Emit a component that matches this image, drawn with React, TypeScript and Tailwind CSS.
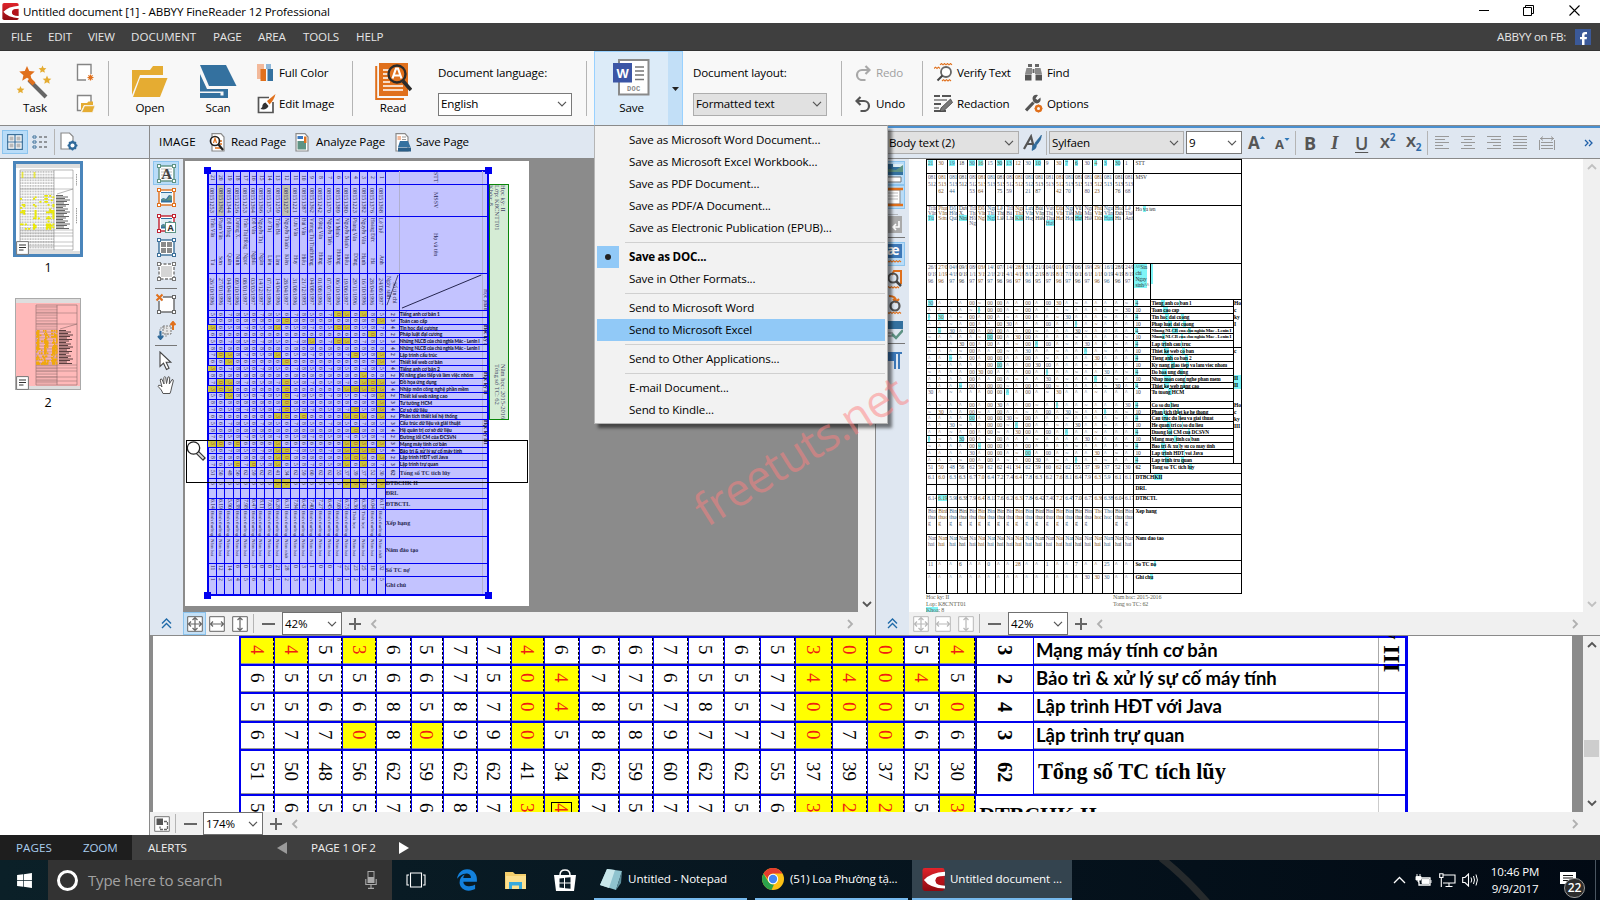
import React from "react";
import { FaWindows, FaEdgeLegacy } from "react-icons/fa";

type Kids = { children?: React.ReactNode };

/* ---------- shared bits ---------- */

const Down = ({ c = "#555" }: { c?: string }) => (
  <svg width="10" height="6" viewBox="0 0 10 6" className="shrink-0">
    <path d="M1 .8 5 4.8 9 .8" fill="none" stroke={c} strokeWidth="1.2" />
  </svg>
);

const Chev = ({ d, c = "#b0b0b0", w = 1.8 }: { d: "l" | "r" | "u" | "d"; c?: string; w?: number }) => {
  const p = { l: "M7 1 3 5 7 9", r: "M3 1 7 5 3 9", u: "M1 7 5 3 9 7", d: "M1 3 5 7 9 3" }[d];
  return (
    <svg width="10" height="10" viewBox="0 0 10 10" className="shrink-0">
      <path d={p} fill="none" stroke={c} strokeWidth={w} />
    </svg>
  );
};

const Sel = ({ cls, children }: Kids & { cls: string }) => (
  <div className={"flex shrink-0 items-center justify-between border pl-[2px] pr-[4px] " + cls}>
    <span>{children}</span>
    <Down />
  </div>
);

const Sep = ({ cls }: { cls: string }) => <div className={"w-px shrink-0 bg-[#b4b4b4] " + cls} />;

/* ---------- icons ---------- */

const Abbyy = ({ s }: { s: number }) => (
  <svg width={s} height={s} viewBox="0 0 24 24" className="shrink-0">
    <defs>
      <linearGradient id="ab" x1="0" y1="0" x2="0" y2="1">
        <stop offset="0" stopColor="#e0242b" />
        <stop offset="1" stopColor="#8e0a10" />
      </linearGradient>
    </defs>
    <rect x=".5" width="23" height="24" rx="2.5" fill="url(#ab)" />
    <path d="M2 12.500Q9 5 24 4V8Q14 8.500 14 13 14 18 24 18.500V21.500Q8 21 2 12.500Z" fill="#fff" />
    <circle cx="18.500" cy="13" r="4.200" fill="#b3121a" />
  </svg>
);

const Star = ({ x, y, r, c }: { x: number; y: number; r: number; c: string }) => (
  <path
    transform={`translate(${x} ${y}) scale(${r})`}
    d="M0-1 .28-.36 .97-.3 .45.16 .6.84 0 .48-.6.84-.45.16-.97-.3-.28-.36Z"
    fill={c}
  />
);

const TaskIcon = () => (
  <svg width="38" height="36" viewBox="0 0 38 36">
    <path d="M13 15 30 32" stroke="#666" strokeWidth="4" />
    <path d="M13 14 18 19" stroke="#e0701c" strokeWidth="4" />
    <Star x={11} y={9} r={8} c="#e0701c" />
    <Star x={26.500} y={4.500} r={4} c="#e5ac32" />
    <Star x={31} y={15} r={4.500} c="#e5ac32" />
    <Star x={4.500} y={25} r={4} c="#e5ac32" />
  </svg>
);

const NewPage = () => (
  <svg width="20" height="20" viewBox="0 0 20 20">
    <path d="M10 17H1.500V1.500H15V11" fill="#fff" stroke="#858585" strokeWidth="1.400" />
    <path d="M14.500 11.500v6M11.500 14.500h6M12.400 12.400l4.200 4.200M16.600 12.400l-4.200 4.200" stroke="#e0701c" strokeWidth="1.200" />
  </svg>
);
const OpenPage = () => (
  <svg width="20" height="20" viewBox="0 0 20 20">
    <path d="M5 16.500H1.500V1.500H15V8" fill="#fff" stroke="#858585" strokeWidth="1.400" />
    <path d="M5 9h6l1.500-1.500H17V11H8l-3 6Z" fill="#e5ac32" />
    <path d="M8.500 11.800H19l-2.500 6.700H5.500Z" fill="#e5ac32" stroke="#f8f8f8" strokeWidth=".7" />
  </svg>
);
const OpenIcon = () => (
  <svg width="36" height="32" viewBox="0 0 36 32">
    <path d="M0 4H18L21 0H31V9H8L0 29Z" fill="#e5ac32" />
    <path d="M8 12H35.500L28 31H1Z" fill="#e5ac32" />
  </svg>
);
const ScanIcon = () => (
  <svg width="37" height="34" viewBox="0 0 37 34">
    <path d="M0 0H26L36.500 21H9Z" fill="#34719f" />
    <path d="M0 9 7 24H28V33H0V28H20.500V30.500H23.500V26.500H0Z" fill="#34719f" fillRule="evenodd" />
  </svg>
);
const ColorIcon = () => (
  <svg width="17" height="18" viewBox="0 0 17 18">
    <path d="M0 0H7V15H0Z" fill="#f3b99a" />
    <path d="M9 0H14V5H9Z" fill="#8fb7d8" />
    <path d="M3.500 5H9V17H3.500Z" fill="#e0701c" />
    <path d="M10.500 5H16V17H10.500Z" fill="#34719f" />
  </svg>
);
const EditIcon = () => (
  <svg width="19" height="20" viewBox="0 0 19 20">
    <path d="M12 3.500H1.500V18.500H16V8" fill="#fff" stroke="#555" strokeWidth="1.700" />
    <path d="M18.500 0 10 7l2.500 3.500Q17 6 18.500 0Z" fill="#e0701c" />
    <path d="M8.500 8.500 11.500 12Q9.500 16.500 3.500 15 6 13 5.500 11 6.500 8.500 8.500 8.500Z" fill="#333" />
  </svg>
);
const ReadIcon = () => (
  <svg width="37" height="38" viewBox="0 0 37 38">
    <path d="M1.200 3V36H29" fill="none" stroke="#e0701c" strokeWidth="2" />
    <path d="M4 0H33V33H4Z" fill="#e0701c" />
    <path d="M8 7h6M8 11h5M8 15h5M8 19h7M8 23h20M8 27h20" stroke="#fff" strokeWidth="1.700" />
    <circle cx="22" cy="11" r="8.500" fill="#e0701c" stroke="#2b2b2b" strokeWidth="2.400" />
    <path d="M17.500 15.500 21 5.500h2l3.500 10M19 12.500h6" fill="none" stroke="#fff" strokeWidth="2.200" />
    <path d="M28 18 36 27" stroke="#2b2b2b" strokeWidth="3.600" />
  </svg>
);
const DocIcon = () => (
  <svg width="38" height="38" viewBox="0 0 38 38" className="font-['Liberation_Sans',sans-serif]">
    <path d="M6 1H35.500V35.500H6Z" fill="#fff" stroke="#8a8a8a" strokeWidth="2" />
    <path d="M22 8h9M22 12h9M22 16h9M22 20.500h9" stroke="#777" strokeWidth="1.500" />
    <path d="M0 4H19V23.500H0Z" fill="#3b55a5" />
    <text x="9.500" y="18.500" textAnchor="middle" fontSize="13" fontWeight="700" fill="#fff">W</text>
    <text x="20.800" y="31.800" textAnchor="middle" fontSize="7" fontWeight="700" fill="#888" letterSpacing=".3" className="font-['Liberation_Mono',monospace]">DOC</text>
  </svg>
);
const UndoIcon = ({ c, flip }: { c: string; flip?: boolean }) => (
  <svg width="16" height="16" viewBox="0 0 16 16" className={flip ? "-scale-x-100" : ""}>
    <path d="M1.500 5H9a5 5 0 0 1 0 10H5.500" fill="none" stroke={c} strokeWidth="2.200" />
    <path d="M5.500 1 1.500 5l4 4" fill="none" stroke={c} strokeWidth="2.200" />
  </svg>
);
const Wave = ({ x, y, n, c = "#e0701c" }: { x: number; y: number; n: number; c?: string }) => (
  <path d={`M${x} ${y}` + "l1.500 -1.300l1.500 1.300".repeat(n)} fill="none" stroke={c} strokeWidth="1.100" />
);
const VerifyIcon = () => (
  <svg width="19" height="19" viewBox="0 0 19 19">
    <Wave x={6} y={1.800} n={4} />
    <Wave x={0} y={5.500} n={2} />
    <Wave x={8} y={18} n={3} />
    <circle cx="12" cy="9" r="5" fill="#fff" stroke="#666" strokeWidth="1.800" />
    <path d="M8.500 12.500 3.500 17.500" stroke="#444" strokeWidth="2" />
  </svg>
);
const RedactIcon = () => (
  <svg width="19" height="19" viewBox="0 0 19 19">
    <path d="M0 2h6M8 2h9M0 10h7M0 17h12" stroke="#555" strokeWidth="1.800" />
    <path d="M0 6h13M0 14h5" stroke="#999" strokeWidth="1.800" />
    <path d="M16.500 5 18.500 8.500 9.500 17 6 17.500 7 14Z" fill="#777" stroke="#444" strokeWidth=".8" />
  </svg>
);
const FindIcon = () => (
  <svg width="17" height="18" viewBox="0 0 17 18">
    <path d="M3 0H7V3H3ZM10 0h4v3h-4ZM7.500 5h2v4h-2Z" fill="#666" />
    <path d="M1.500 4H7V10H0ZM10 4h5.500L17 10H10Z" fill="#8a8a8a" />
    <path d="M0 10.500H6.500V16.500H0ZM10.500 10.500H17V16.500H10.500Z" fill="#555" />
  </svg>
);
const OptIcon = () => (
  <svg width="19" height="19" viewBox="0 0 19 19">
    <path d="M1 16.500 8.500 8.500" stroke="#555" strokeWidth="3.200" />
    <path d="M15.500 3.500 12.500 6 10.500 4.500 13 1Q8.500 0 7.500 4 7.500 9 12 9.500 16.500 8.500 15.500 3.500Z" fill="#555" />
    <circle cx="13.500" cy="14.500" r="2.600" fill="none" stroke="#e0701c" strokeWidth="2.200" />
    <path d="M13.500 10.500v8M9.500 14.500h8M10.700 11.700l5.600 5.600M16.300 11.700l-5.600 5.600" stroke="#e0701c" strokeWidth="1.300" />
    <circle cx="13.500" cy="14.500" r="1.500" fill="#f8f8f8" />
  </svg>
);

const PageGlyph = ({ children }: Kids) => (
  <svg width="18" height="19" viewBox="0 0 18 19" className="shrink-0">
    <path d="M3 .7H12L15 4V18H3Z" fill="#fff" stroke="#8a8a8a" strokeWidth="1.200" />
    {children}
  </svg>
);

const Nodes = ({ c }: { c: string }) => (
  <>
    {[1.500, 16.500].map((x) => [1.500, 16.500].map((y) => (
      <rect key={x + "-" + y} x={x - 1.500} y={y - 1.500} width="3" height="3" fill="#fff" stroke={c} strokeWidth="1" transform="translate(.5 .5)" />
    )))}
  </>
);
const AreaIcon = ({ c, dash, children }: Kids & { c: string; dash?: boolean }) => (
  <svg width="19" height="19" viewBox="0 0 19 19" className="overflow-visible">
    <rect x="2" y="2" width="15" height="15" fill="#fff" stroke={c} strokeWidth="1.400" strokeDasharray={dash ? "3 1.500" : undefined} />
    <Nodes c={c} />
    {children}
  </svg>
);
const Pic = () => (
  <>
    <path d="M4 4H15V14.500H4Z" fill="#34719f" />
    <path d="M4 5h11v3l-3-1-3 4-3-1-2 1.500Z" fill="#dfeef5" />
    <path d="M4 12 7 10.500 9.500 12 13 7.500 15 8V12.500H4Z" fill="#5e9384" />
  </>
);

const Fit = ({ k, c = "#666" }: { k: 0 | 1 | 2; c?: string }) => (
  <svg width="16" height="16" viewBox="0 0 16 16">
    <path d="M.7.7H15.300V15.300H.7Z" fill="#fff" stroke={c} strokeWidth="1" />
    {k !== 1 && <path d="M8 1.500V14.500M5.500 4 8 1.500 10.500 4M5.500 12 8 14.500 10.500 12" fill="none" stroke={c} strokeWidth="1.200" />}
    {k !== 2 && <path d="M1.500 8H14.500M4 5.500 1.500 8 4 10.500M12 5.500 14.500 8 12 10.500" fill="none" stroke={c} strokeWidth="1.200" />}
  </svg>
);
const Minus = () => <div className="h-[2px] w-[13px] shrink-0 bg-[#666]" />;
const Plus = () => (
  <svg width="12" height="12" viewBox="0 0 12 12" className="shrink-0">
    <path d="M6 0V12M0 6H12" stroke="#666" strokeWidth="2" />
  </svg>
);
const DoubleUp = () => (
  <svg width="11" height="11" viewBox="0 0 11 11">
    <path d="M1 5.500 5.500 1 10 5.500M1 10 5.500 5.500 10 10" fill="none" stroke="#1f6aa8" strokeWidth="1.400" />
  </svg>
);

/* ---------- data ---------- */

const subjects = [
  "Tiếng anh cơ bản 1", "Toán cao cấp", "Tin học đại cương", "Pháp luật đại cương",
  "Những NLCB của chủ nghĩa Mác - Lenin I", "Những NLCB của chủ nghĩa Mác - Lenin I", "Lập trình cấu trúc",
  "Thiết kế web cơ bản", "Tiếng anh cơ bản 2", "Kĩ năng giao tiếp và làm việc nhóm", "Đồ họa ứng dụng",
  "Nhập môn công nghệ phần mềm", "Thiết kế web nâng cao", "Tư tưởng HCM", "Cơ sở dữ liệu",
  "Phân tích thiết kế hệ thống", "Cấu trúc dữ liệu và giải thuật", "Hệ quản trị cơ sở dữ liệu",
  "Đường lối CM của ĐCSVN", "Mạng máy tính cơ bản", "Bảo trì & xử lý sự cố máy tính",
  "Lập trình HĐT với Java", "Lập trình trự quan",
];
const failed: number[][] = [
  [15, 16, 18], [9, 20], [0, 8, 15, 16], [19], [12, 15, 16], [], [1, 2, 8, 17, 20], [2, 9, 20], [0], [18],
  [1, 2, 9, 18, 19, 20], [0, 1, 2, 9, 16, 17, 18, 19, 20], [2, 9, 20], [9, 20], [9, 17, 20],
  [8, 9, 11, 16, 17, 18, 20], [], [17], [], [0, 1, 3, 8, 16, 17, 18, 20], [8, 9, 16, 17, 18, 19],
  [8, 9, 16, 17, 18, 20], [3, 5, 8, 16, 18],
];
const ids = "1253 1362 1344 1256 1253 1364 1366 1375 1259 1257 1221 1387 1362 1242 1370 1389 1380 1223 1382 1376 1368".split(" ");
const first = ["Trần Văn", "Phạm Văn", "Đỗ Hồng", "Dương X.", "Trần Thị Hồng", "Đỗ Văn", "Nguyễn Thị", "Lê Thị", "Trần Bá", "Nguyễn Thành", "Lưu Văn", "Bùi Văn", "Vương Thị Thu", "Đặng Văn", "Nguyễn Tiến", "Vũ Minh", "Nguyễn Mạnh", "Phùng Văn", "Nguyễn Văn", "Hoàng Đức", "Lê Thế"];
const last = ["Tú", "Sơn", "Quân", "Ninh", "Ngọc", "Nghĩa", "Ngân", "Liên", "Lâm", "Kiên", "Huy", "Hiếu", "Hường", "Hưng", "Hợp", "Hương", "Hiếu", "Dũng", "Hạnh", "Hà", "Anh"];
const dates = "26/10/1996 27/01/1996 04/04/1997 09/10/1996 08/01/1997 03/03/1997 14/12/1997 07/12/1996 14/04/1996 28/04/1997 31/08/1996 21/12/1995 04/08/1997 01/08/1996 07/07/1997 06/10/1996 19/06/1997 29/11/1996 16/10/1996 28/04/1996 24/08/1997".split(" ");
const totals = "51 50 48 56 62 59 62 62 41 34 62 59 60 62 62 55 37 39 37 52 30".split(" ");
const averages = "6.14 6.19 5.90 6.38 7.98 6.47 8.11 7.63 6.28 6.31 7.84 6.42 7.40 7.27 6.45 7.08 6.73 6.36 6.38 6.04 6.17".split(" ");
const debts = "11 12 14 6 0 3 0 0 21 28 0 3 1 0 0 7 25 23 25 10 32".split(" ");
const cols = Array.from({ length: 21 }, (_, i) => i);
const grade = (r: number, c: number) => String(5 + ((r * 7 + c * 5 + r * c) % 4));

/* ---------- scanned page ---------- */

const scanGrid = "grid w-[177.7px] shrink-0 grid-cols-[27fr_24fr_26fr_23fr_25fr_23fr_24fr_25fr_26fr_26fr_27fr_24fr_25fr_27fr_26fr_26fr_25fr_26fr_26fr_26fr_26fr]";

const ScanRow = ({ h, cell, hot = [], hotCls = "bg-[#c9c43c] text-[#b04a20]", children, mid = "justify-center" }:
  Kids & { h: string; cell: (i: number) => React.ReactNode; hot?: number[]; hotCls?: string; mid?: string }) => (
  <div className={"flex border-b border-[#0000f0] " + h}>
    <div className={scanGrid}>
      {cols.map((i) => (
        <div key={i} className={"flex min-w-0 items-center overflow-hidden border-r border-[#0000f0] leading-none [writing-mode:vertical-rl] " + mid + " " + (hot.includes(i) ? hotCls : "")}>
          {cell(i)}
        </div>
      ))}
    </div>
    {children}
  </div>
);

const HeadCell = ({ children }: Kids) => (
  <>
    <div className="w-[14px] shrink-0 border-r border-[#b0b0d0]" />
    <div className="flex w-[83.3px] shrink-0 items-center justify-center border-r border-[#b0b0d0] pr-[10px] text-[6px] [writing-mode:vertical-rl]">
      {children}
    </div>
  </>
);
const FootCell = ({ children }: Kids) => (
  <div className="flex w-[97.3px] shrink-0 items-center border-r border-[#b0b0d0] text-[6px] font-bold">{children}</div>
);

const ScanTable = () => (
  <div className="relative h-[426px] w-[282px] shrink-0 border-2 border-[#0000f0] bg-[#c3c3ff] font-['Liberation_Serif',serif] text-[5.600px] leading-none tracking-normal text-[#2a2a55]">
    <div className="-ml-px -mt-px">
      <ScanRow h="h-[14px]" cell={(i) => 21 - i}><HeadCell>STT</HeadCell></ScanRow>
      <ScanRow h="h-[32px]" cell={(i) => <span className="text-[6.200px]">{"0815" + ids[i]}</span>} hot={[1, 9]} hotCls="bg-[#c0c0b4]"><HeadCell>MSSV</HeadCell></ScanRow>
      <ScanRow h="h-[57px]" mid="justify-between pb-[8px] pt-[1px]" cell={(i) => (<><span className="whitespace-nowrap text-[5.200px]">{first[i]}</span><span>{last[i]}</span></>)}>
        <HeadCell>Họ và tên</HeadCell>
      </ScanRow>
      <ScanRow h="h-[37px]" cell={(i) => <span className="text-[6px]">{dates[i]}</span>}>
        <div className="relative w-[14px] shrink-0 border-r border-[#0000f0]">
          <svg className="absolute inset-0 h-full w-full" viewBox="0 0 14 37" preserveAspectRatio="none"><path d="M13 1 1 32" stroke="#22224a" strokeWidth=".8" /></svg>
          <div className="flex flex-col pt-[2px] [writing-mode:vertical-rl]"><span className="pt-[6px]">Số tín chỉ</span><span>Ngày sinh</span></div>
        </div>
        <div className="w-[83.3px] shrink-0 border-r border-[#b0b0d0]">
          <svg className="h-full w-full" viewBox="0 0 83 37" preserveAspectRatio="none"><path d="M82 1 2 35" stroke="#22224a" strokeWidth="1" /></svg>
        </div>
        <div className="flex items-center justify-end text-[5.500px] [writing-mode:vertical-rl]">Học phần</div>
      </ScanRow>
      {subjects.map((s, r) => (
        <ScanRow key={r} h="h-[6.840px]" hot={failed[r]} cell={(i) => (failed[r].includes(i) ? (i % 2 ? "0" : "3") : grade(r, i))}>
          <div className="flex w-[14px] shrink-0 items-center justify-center border-r border-[#0000f0] font-bold [writing-mode:vertical-rl]">{2 + (r % 3)}</div>
          <div className={"w-[83.300px] shrink-0 whitespace-nowrap border-r border-[#b0b0d0] font-['Lato','Noto_Sans',sans-serif] font-black leading-[6px] text-[#14143c] " + (r === 4 || r === 5 ? "text-[4.700px] tracking-[-0.150px]" : "text-[4.900px] tracking-[-0.05px]")}>{s}</div>
          {(r === 2 || r === 9 || r === 16) && (
            <div className="w-[6px] overflow-visible whitespace-nowrap text-[5.500px] font-bold text-[#14143c] [writing-mode:vertical-rl]">{"Học kỳ " + (r === 2 ? "I" : r === 9 ? "II" : "III")}</div>
          )}
        </ScanRow>
      ))}
      <ScanRow h="h-[10.600px]" cell={(i) => totals[i]}>
        <div className="flex w-[14px] shrink-0 items-center justify-center border-r border-[#0000f0] font-bold [writing-mode:vertical-rl]">62</div>
        <div className="flex w-[83.300px] items-center text-[6px] font-bold">Tổng số TC tích lũy</div>
      </ScanRow>
      <ScanRow h="h-[10px]" hot={[8, 9, 16, 17, 18, 20]} cell={(i) => grade(3, i)}><FootCell>ĐTBCHK II</FootCell></ScanRow>
      <ScanRow h="h-[10px]" cell={() => ""}><FootCell>ĐRL</FootCell></ScanRow>
      <ScanRow h="h-[11px]" cell={(i) => averages[i]}><FootCell>ĐTBCTL</FootCell></ScanRow>
      <ScanRow h="h-[27px]" mid="justify-start pt-[1px]" cell={(i) => <span className="whitespace-nowrap text-[5px]">{i === 17 || i === 18 ? "Thôi học" : "Bình thường"}</span>}><FootCell>Xếp hạng</FootCell></ScanRow>
      <ScanRow h="h-[27px]" mid="justify-start pt-[2px]" cell={(i) => <span className="whitespace-nowrap text-[5px]">{i === 9 || i === 20 ? "Năm nhất" : "Năm hai"}</span>}><FootCell>Năm đào tạo</FootCell></ScanRow>
      <ScanRow h="h-[13px]" mid="justify-start pt-[1px]" cell={(i) => debts[i]}><FootCell>Số TC nợ</FootCell></ScanRow>
      <ScanRow h="h-[18px]" mid="justify-start pt-[1px]" cell={(i) => 1 + (i % 8)}><FootCell>Ghi chú</FootCell></ScanRow>
    </div>
    <i className="absolute -left-[5px] -top-[5px] h-[7px] w-[7px] bg-[#0000f0]" />
    <i className="absolute -right-[5px] -top-[5px] h-[7px] w-[7px] bg-[#0000f0]" />
    <i className="absolute -bottom-[5px] -left-[5px] h-[7px] w-[7px] bg-[#0000f0]" />
    <i className="absolute -bottom-[5px] -right-[5px] h-[7px] w-[7px] bg-[#0000f0]" />
  </div>
);

/* ---------- recognised text ---------- */

const textGrid = "grid w-[207.400px] shrink-0 grid-cols-[31fr_33fr_29fr_31fr_26fr_28fr_29fr_28fr_27fr_30fr_30fr_31fr_31fr_28fr_29fr_28fr_30fr_29fr_33fr_30fr_31fr]";
const tints = ["text-[#5a5a78]", "text-[#8a5a28]", "text-[#3c6a8c]", "text-[#444444]"];
const ocr = [
  "Tieng anh co ban 1", "Toan cao cap", "Tin hoc dai cuong", "Phap luat dai cuong", "Nhung NLCB cua chu nghia Mac - Lenin I",
  "Nhung NLCB cua chu nghia Mac - Lenin I", "Lap trinh cau truc", "Thiet ke web co ban", "Tieng anh co ban 2",
  "Ky nang giao tiep va lam viec nhom", "Do hoa ung dung", "Nhap mon cong nghe phan mem", "Thiet ke web nang cao",
  "Tu tuong HCM", "Co so du lieu", "Phan tich thiet ke he thong", "Cau truc du lieu va giai thuat",
  "He quan tri co so du lieu", "Duong loi CM cua DCSVN", "Mang may tinh co ban", "Bao tri & xu ly su co may tinh",
  "Lap trinh HDT voi Java", "Lap trinh tru quan",
];

const Hl = ({ t, k }: { t: string; k: number }) => {
  const a = 4 + (k % 5);
  return (<>{t.slice(0, a)}<span className="bg-[#7ff5f7]">{t.slice(a, a + 2)}</span>{t.slice(a + 2, a + 8)}<span className="bg-[#7ff5f7]">{t.slice(a + 8, a + 9)}</span>{t.slice(a + 9)}</>);
};

const TextRow = ({ h, cell, hot = [], children }: Kids & { h: string; cell: (i: number) => React.ReactNode; hot?: number[] }) => (
  <div className={"flex border-b border-black " + h}>
    <div className={textGrid}>
      {cols.map((i) => (
        <div key={i} className={"min-w-0 overflow-hidden border-r border-black pl-[1px] " + tints[i % 4]}>
          <span className={hot.includes(i) ? "bg-[#7ff5f7]" : ""}>{cell(i)}</span>
        </div>
      ))}
    </div>
    {children}
  </div>
);

const TextTable = () => (
  <div className="h-[435px] w-[316px] border-l border-r border-t border-black font-['Liberation_Serif',serif] text-[5.500px] leading-[6px] text-[#333]">
    <TextRow h="h-[14px]" hot={[0, 2, 4, 5, 7, 8, 11, 14, 15, 17, 18, 19]} cell={(i) => (i % 3 === 1 ? "30" : 21 - i)}><span className="pl-[1px]">STT</span></TextRow>
    <TextRow h="h-[32px]" cell={(i) => <span className="block leading-[7px]">081<br />5{ids[i].slice(0, 2)}<br />{i % 3 ? ids[i].slice(2) : ""}</span>}><span className="pl-[1px]">MSV</span></TextRow>
    <TextRow h="h-[58px]" cell={(i) => <span className="block leading-[5px]">{first[i].split(" ").map((w, k) => <span key={k} className="block">{w}</span>)}<span className={i % 3 === 0 ? "bg-[#7ff5f7]" : ""}>{last[i]}</span></span>}><span className="pl-[1px]">Ho <span className="bg-[#7ff5f7]">v</span>a ten</span></TextRow>
    <TextRow h="h-[36px]" hot={[12, 14]} cell={(i) => <span className="block leading-[7px]">{dates[i].slice(0, 4)}<br />{dates[i].slice(4, 8)}<br />{dates[i].slice(8)}</span>}>
      <div className="w-[17px] shrink-0 border-r border-black"><span className="block w-[13px] bg-[#7ff5f7] pl-[1px]">^^Sin chi Ngay sinh^^</span></div>
      <span className="h-[20px] w-[2px] bg-[#7ff5f7]" />
    </TextRow>
    <div className="flex">
      <div className="w-[307px]">
        {ocr.map((s, r) => (
          <TextRow key={r} h={r === 13 ? "h-[12.300px]" : "h-[6.890px]"} hot={r === 2 ? [0, 1] : r === 19 ? [0, 3] : [(r * 5) % 19]}
            cell={(i) => ([4, 6, 7, 10].includes(i) && (r + i) % 4 !== 1 ? <span className="text-[#6d5a46]">00</span> : i === 12 && r % 3 === 0 ? "00" : (r * 3 + i * 7) % 13 === 0 ? "30" : (r + i) % 5 ? "^" : "~")}>
            <div className="w-[17px] shrink-0 border-r border-black pl-[1px]"><span className={r % 2 ? "" : "bg-[#7ff5f7]"}>{r % 2 ? "10" : "4"}</span></div>
            <div className={"w-[82.600px] shrink-0 whitespace-nowrap border-r border-black font-bold text-black " + (r === 4 || r === 5 ? "text-[4.800px] tracking-[-0.200px]" : "text-[5.300px]")}><Hl t={s} k={r} /></div>
          </TextRow>
        ))}
      </div>
      <div className="flex h-[163.800px] w-[7px] flex-col overflow-hidden border-b border-black text-[5.500px] font-bold leading-[7px] text-black">
        <span>Ho</span><span>c</span><span>ky</span><span>I</span>
        <span className="mt-[19px] border-t border-black">c</span><span className="mt-[20px] bg-[#7ff5f7]">II</span><span className="bg-[#7ff5f7]">II</span><span className="mt-[13px]">Ho</span><span>c</span><span>ky</span><span>III</span>
      </div>
    </div>
    <TextRow h="h-[10px]" cell={(i) => totals[i]}><div className="w-[17px] shrink-0 border-r border-black pl-[1px] font-bold">62</div><b className="text-black">Tong so TC tich l<span className="bg-[#7ff5f7]">u</span>y</b></TextRow>
    <TextRow h="h-[11px]" cell={(i) => averages[20 - i].slice(0, 3)}><b className="pl-[1px] text-black">DTBCH<span className="bg-[#7ff5f7]">KII</span></b></TextRow>
    <TextRow h="h-[10px]" cell={() => ""}><b className="pl-[1px] text-black">DRL</b></TextRow>
    <TextRow h="h-[13px]" hot={[1]} cell={(i) => averages[i]}><b className="pl-[1px] text-black">DTBCTL</b></TextRow>
    <TextRow h="h-[27px]" cell={(i) => (i === 17 || i === 18 ? <>Thoi<br />hoc</> : <>Binh<br />thuon<br />g</>)}><b className="pl-[1px] text-black">Xep hang</b></TextRow>
    <TextRow h="h-[26px]" cell={() => <>Nam<br />hai</>}><b className="pl-[1px] text-black">Nam dao tao</b></TextRow>
    <TextRow h="h-[13px]" cell={(i) => (i % 3 ? "^" : debts[i])}><b className="pl-[1px] text-black">So TC n<span className="bg-[#7ff5f7]">o</span></b></TextRow>
    <TextRow h="h-[20.300px]" cell={(i) => (i > 15 && i < 19 ? "30" : "^")}><b className="pl-[1px] text-black">Ghi ch<span className="bg-[#7ff5f7]">u</span></b></TextRow>
  </div>
);

/* ---------- magnified strip ---------- */

const zoomRows = [
  { h: "h-[28px]", v: "4* 4* 5 3* 6 5 7 7 4* 6 6 6 7 5 6 5 3* 0* 0* 5 4*", tc: "3", t: subjects[19] },
  { h: "h-[28.300px]", v: "6 5 5 5 6 6 7 5 0* 4* 7 7 6 5 5 7 4* 4* 0* 4* 5", tc: "2", t: subjects[20] },
  { h: "h-[28.400px]", v: "5 5 6 6 8 5 8 7 0* 4* 8 5 7 8 5 7 0* 0* 0* 5 0*", tc: "4", t: subjects[21] },
  { h: "h-[28.300px]", v: "6 7 7 0* 8 0* 9 9 0* 5 8 8 9 7 7 7 0* 7 0* 6 6", tc: "3", t: subjects[22] },
  { h: "h-[45px]", v: totals.join(" "), tc: "62", t: "Tổng số TC tích lũy" },
  { h: "h-[28px]", v: "5 6 5 5 7 6 8 7 3* 4* 7 5 7 7 5 6 3* 2* 2* 5 3*", tc: "", t: "" },
];
const zoomGrid = "grid w-[735px] shrink-0 grid-cols-[342fr_341fr_341fr_336fr_346fr_328fr_336fr_337fr_337fr_341fr_400fr_341fr_354fr_357fr_363fr_350fr_366fr_352fr_368fr_357fr_357fr]";

const ZoomStrip = () => (
  <div className="flex h-[176px] w-[1419px] shrink-0 overflow-hidden bg-white pl-[86px] font-['Liberation_Serif',serif] text-[19px] leading-none tracking-normal text-black">
    <div className="w-[1169px] shrink-0 border-l-2 border-r-[3px] border-[#0000f0]">
      {zoomRows.map((row, r) => (
        <div key={r} className={"flex border-t-2 border-[#0000f0] " + row.h}>
          <div className={zoomGrid}>
            {row.v.split(" ").map((v, i) => (
              <div key={i} className="border-r border-[#0000f0]">
                <div className={"flex h-full items-center justify-center border-b border-r border-b-[#9a9a9a] border-r-black pb-px [border-right-style:dashed] " + (v.endsWith("*") ? "bg-[#ffff00] text-[#f02010]" : "")}>
                  <span className={"[writing-mode:vertical-rl] " + (r === 5 && i === 9 ? "border border-black" : "")}>{v.replace("*", "")}</span>
                </div>
              </div>
            ))}
          </div>
          {r < 5 ? (
            <>
              <div className="flex w-[58px] shrink-0 items-center justify-center border-l border-r border-l-[#000060] border-r-[#0000f0] pb-px text-[20.500px] font-bold [writing-mode:vertical-rl]">{row.tc}</div>
              <div className={"flex w-[345px] shrink-0 items-center whitespace-nowrap border-b border-r border-[#aaa] font-bold " + (r < 4 ? "pb-px pl-[2px] font-['Lato','Noto_Sans',sans-serif] text-[18.500px] font-black" : "pl-[4px] text-[22.300px]")}>{row.t}</div>
              <div className="w-[25px] overflow-visible text-[23px] font-bold">
                {r === 0 && <div className="-mt-[10px] h-[20px] whitespace-nowrap pl-px [writing-mode:vertical-rl]">ỳ III</div>}
              </div>
            </>
          ) : (
            <div className="flex w-[403px] border-r border-[#ccc] pl-[3px] pt-[8px] text-[22px] font-bold">ĐTBCHK II</div>
          )}
        </div>
      ))}
    </div>
  </div>
);

/* ---------- page thumbnails ---------- */

const Thumb = ({ pink }: { pink?: boolean }) => {
  const x0 = pink ? 20 : 4;
  const x1 = pink ? 41 : 38;
  const xr = pink ? 61 : 57;
  const ink = pink ? "#8a6a6a" : "#888";
  const step = (x1 - x0) / 21;
  return (
    <svg width="64" height="90" viewBox="0 0 64 90">
      <rect width="64" height="90" fill={pink ? "#ffb9b9" : "#fff"} />
      <rect width="64" height="4" fill="#dedede" />
      <rect y="87" width="64" height="3" fill="#dedede" />
      {cols.map((i) => (
        <path key={i} d={`M${x0 + i * step + 0.8} 7V85`} stroke={ink} strokeWidth={step * 0.6} strokeDasharray="1.800 1" opacity=".55" />
      ))}
      {[14, 25, 66, 69, 72, 78, 82].map((y) => <path key={y} d={`M${x0} ${y}H${xr}`} stroke={ink} strokeWidth=".5" />)}
      <path d={`M${x1} 6V86M${x0} 6H${xr}V86H${x0}Z`} fill="none" stroke={ink} strokeWidth=".6" />
      {failed.map((_, r) => (
        <path key={r} d={`M${x1 + 2} ${31.500 + r * 1.500}h${7 + ((r * 5) % 8)}`} stroke={pink ? "#5c4040" : "#666"} strokeWidth="1" />
      ))}
      {failed.map((f, r) => (pink ? [...f, ...failed[(r + 7) % 23], ...failed[(r + 12) % 23].map((v) => (v + 5) % 12)] : f).map((c, k) => (
        <rect key={r + "-" + k} x={x0 + c * step} y={31 + r * 1.500} width={step + 0.4} height="1.700" fill={pink ? "#f0a80c" : "#e9e800"} />
      )))}
      {!pink && <path d="M6.500 8v6M18.500 8v6" stroke="#e9e800" strokeWidth="1.800" opacity=".7" />}
      <path d={`M${x1 + 3} 30 ${xr} 25`} stroke={ink} strokeWidth=".6" />
      {!pink && <path d="M60.500 10v12M60.500 44v16" stroke="#999" strokeWidth="1" strokeDasharray="1.500 .8" />}
    </svg>
  );
};
const ThumbTag = () => (
  <svg width="13" height="14" viewBox="0 0 13 14" className="absolute -bottom-px left-0">
    <path d="M.6.6H12.400V13.400H.6Z" fill="#fff" stroke="#777" />
    <path d="M3 4h7M3 6.500h7M3 9h4.500" stroke="#333" strokeWidth="1.100" />
  </svg>
);

/* ---------- menu ---------- */

const MenuItem = ({ children, on, bold, dot }: Kids & { on?: boolean; bold?: boolean; dot?: boolean }) => (
  <div className={"mx-[2px] flex h-[22px] shrink-0 items-center " + (on ? "bg-[#91c9f7]" : "")}>
    <div className={"flex h-[22px] w-[22px] items-center justify-center " + (dot ? "bg-[#91c9f7]" : "")}>
      {dot && <i className="h-[6px] w-[6px] rounded-full bg-[#222]" />}
    </div>
    <span className={"ml-[10px] " + (bold ? "font-bold tracking-[-0.25px]" : "tracking-[-0.12px]")}>{children}</span>
  </div>
);
const MenuSep = () => <div className="ml-[30px] mr-[2px] flex h-[7px] shrink-0 items-center"><div className="h-px w-full bg-[#d0d0d0]" /></div>;

const Align = ({ k }: { k: number }) => (
  <svg width="16" height="14" viewBox="0 0 16 14" className="shrink-0">
    <path
      d={["M0 .5H14M0 3.500H10M0 6.500H14M0 9.500H8M0 12.500H14", "M0 .5H14M3 3.500H11M0 6.500H14M3 9.500H11M0 12.500H14", "M0 .5H14M4 3.500H14M0 6.500H14M6 9.500H14M0 12.500H14", "M0 .5H14M0 3.500H14M0 6.500H14M0 9.500H14M0 12.500H14", "M.5 4V14M15.500 4V14M1 2.500H15M4 .5 1.500 2.500 4 4.500M12 .5 14.500 2.500 12 4.500M2 6.500H14M2 9.500H14M2 12.500H14"][k]}
      fill="none" stroke="#999" strokeWidth="1"
    />
  </svg>
);

const ZoomBar = ({ light, active }: { light?: boolean; active?: boolean }) => (
  <>
    <div className={"flex h-[23px] w-[23px] shrink-0 items-center justify-center " + (active ? "border border-[#8cc4ee] bg-[#c4e0f6]" : "")}><Fit k={0} c={light ? "#b8b8b8" : "#666"} /></div>
    <div className="ml-[3px]"><Fit k={1} c={light ? "#b8b8b8" : "#666"} /></div>
    <div className="ml-[7px]"><Fit k={2} c={light ? "#b8b8b8" : "#666"} /></div>
    <Sep cls="ml-[5px] h-[19px] bg-[#777]" />
    <div className="ml-[8px]"><Minus /></div>
    <Sel cls="ml-[7px] h-[23px] w-[60px] border-[#707070] bg-white">42%</Sel>
    <div className="ml-[7px]"><Plus /></div>
    <div className="ml-[8px]"><Chev d="l" /></div>
    <div className="grow" />
  </>
);

const Tile = ({ on, children }: Kids & { on?: boolean }) => (
  <div className={"flex h-[24px] w-[26px] items-center justify-center border " + (on ? "border-[#8cc4ee] bg-[#b9dcf8]" : "border-transparent")}>{children}</div>
);

export default function App() {
  return (
    <div className="relative flex h-[900px] w-[1600px] flex-col overflow-hidden bg-white font-['Open_Sans','Noto_Sans',sans-serif] text-[11.600px] leading-none tracking-[-0.15px] text-black">
      {/* title bar */}
      <div className="flex h-[23px] shrink-0 items-center pl-[2px]">
        <Abbyy s={17} />
        <span className="ml-[4px] whitespace-nowrap tracking-[-0.12px]">Untitled document [1] - ABBYY FineReader 12 Professional</span>
        <div className="ml-auto mr-[20px] flex -translate-y-px items-center">
          <div className="h-px w-[10px] bg-black" />
          <svg width="11" height="11" viewBox="0 0 11 11" className="ml-[34px]"><path d="M.5 2.500H8.500V10.500H.5ZM2.500 2.500V.5H10.500V8.500H8.500" fill="none" stroke="#000" /></svg>
          <svg width="11" height="11" viewBox="0 0 11 11" className="ml-[35px]"><path d="M.5.5 10.500 10.500M10.500.5.5 10.500" stroke="#000" strokeWidth="1.100" /></svg>
        </div>
      </div>
      {/* menu bar */}
      <div className="flex h-[28px] shrink-0 items-center border-b border-[#333] bg-[#3f3f3f] pl-[11px] text-[#e6e6e6]">
        <span className="w-[37px]">FILE</span><span className="w-[40px]">EDIT</span><span className="w-[43px]">VIEW</span>
        <span className="w-[82px] tracking-normal">DOCUMENT</span><span className="w-[45px]">PAGE</span><span className="w-[45px]">AREA</span>
        <span className="w-[53px]">TOOLS</span><span>HELP</span>
        <span className="ml-auto tracking-[-0.25px]">ABBYY on FB:</span>
        <div className="ml-[9px] mr-[9px] flex h-[16px] w-[16px] items-end justify-center bg-[#3b5998]">
          <svg width="10" height="14" viewBox="0 0 10 14"><path d="M4 14V8.200H2V6H4V4Q4 1 7 1H9V3.200H7.700Q6.500 3.200 6.500 4.300V6H9L8.700 8.200H6.500V14Z" fill="#fff" /></svg>
        </div>
      </div>
      {/* main toolbar */}
      <div className="flex h-[74px] shrink-0 items-start bg-[#f8f8f8]">
        <div className="flex w-[70px] flex-col items-center pt-[14px]"><TaskIcon /><span className="mt-[1px]">Task</span></div>
        <div className="ml-[6px] flex w-[20px] flex-col gap-[11px] pt-[12px]"><NewPage /><OpenPage /></div>
        <Sep cls="ml-[12px] mt-[10px] h-[55px]" />
        <div className="ml-[12px] flex w-[58px] flex-col items-center pt-[15px]"><OpenIcon /><span className="mt-[4px]">Open</span></div>
        <div className="ml-[9px] flex w-[60px] flex-col items-center pt-[14px]"><ScanIcon /><span className="mt-[3px]">Scan</span></div>
        <div className="ml-[9px] flex w-[91px] flex-col pt-[13px]">
          <div className="flex h-[18px] items-center"><ColorIcon /><span className="ml-[5px] whitespace-nowrap">Full Color</span></div>
          <div className="mt-[12px] flex h-[20px] items-center"><EditIcon /><span className="ml-[3px] whitespace-nowrap">Edit Image</span></div>
        </div>
        <Sep cls="ml-[4px] mt-[10px] h-[55px]" />
        <div className="ml-[20px] flex w-[40px] flex-col items-center pt-[12px]"><ReadIcon /><span className="mt-[1px]">Read</span></div>
        <div className="ml-[25px] flex w-[135px] flex-col pt-[16px]">
          <span>Document language:</span>
          <Sel cls="mt-[14px] h-[23px] w-[134px] border-[#7a7a7a] bg-white">English</Sel>
        </div>
        <Sep cls="ml-[13px] mt-[10px] h-[55px]" />
        <div className="ml-[7px] flex h-[74px] w-[89px] border border-b-0 border-[#99d1ff] bg-[#dcebf8]">
          <div className="flex w-[73px] flex-col items-center pt-[7px]"><DocIcon /><span className="mt-[5px]">Save</span></div>
          <div className="flex flex-1 items-center justify-center bg-[#c2dff7]"><svg width="7" height="4" viewBox="0 0 7 4"><path d="M0 0H7L3.500 4Z" fill="#222" /></svg></div>
        </div>
        <div className="ml-[10px] flex w-[135px] flex-col pt-[16px]">
          <span>Document layout:</span>
          <Sel cls="mt-[14px] h-[23px] w-[134px] border-[#adadad] bg-[#e1e1e1]">Formatted text</Sel>
        </div>
        <Sep cls="ml-[13px] mt-[10px] h-[55px]" />
        <div className="ml-[13px] flex w-[67px] flex-col pt-[12px]">
          <div className="flex h-[19px] items-center gap-[5px] text-[#a0a0a0]"><UndoIcon c="#a8a8a8" flip /><span>Redo</span></div>
          <div className="mt-[12px] flex h-[19px] items-center gap-[5px]"><UndoIcon c="#555" /><span>Undo</span></div>
        </div>
        <Sep cls="mt-[10px] h-[55px]" />
        <div className="ml-[11px] flex w-[91px] flex-col pt-[12px]">
          <div className="flex h-[19px] items-center gap-[4px]"><VerifyIcon /><span className="whitespace-nowrap tracking-[-0.3px]">Verify Text</span></div>
          <div className="mt-[12px] flex h-[19px] items-center gap-[4px]"><RedactIcon /><span>Redaction</span></div>
        </div>
        <div className="flex flex-col pt-[12px]">
          <div className="flex h-[19px] items-center gap-[5px]"><FindIcon /><span>Find</span></div>
          <div className="mt-[12px] flex h-[19px] items-center gap-[3px]"><OptIcon /><span>Options</span></div>
        </div>
      </div>
      {/* pane toolbars */}
      <div className="flex h-[34px] shrink-0 border-b border-t border-[#8a8a8a] bg-[#dfe7f1]">
        <div className="flex w-[150px] items-center border-r border-[#8a8a8a] pl-[2px]">
          <div className="flex h-[24px] w-[26px] items-center justify-center border border-[#8cc4ee] bg-[#b9dcf8]">
            <svg width="16" height="16" viewBox="0 0 16 16"><path d="M.7.7H15.300V15.300H.7Z" fill="#fff" stroke="#3b6f99" strokeWidth="1.200" /><path d="M2.500 2.500h4v4h-4ZM9.500 2.500h4v4h-4ZM2.500 9.500h4v4h-4ZM9.500 9.500h4v4h-4Z" fill="#b9b9b9" /><path d="M8 0V16M0 8H16" stroke="#3b6f99" strokeWidth="1.200" /></svg>
          </div>
          <svg width="16" height="14" viewBox="0 0 16 14" className="ml-[4px]"><path d="M1 1h3v2H1ZM1 6h3v2H1ZM1 11h3v2H1Z" fill="#fff" stroke="#3b6f99" /><path d="M7 2h3M12 2h3M7 7h3M12 7h3M7 12h3M12 12h3" stroke="#444" strokeWidth="1.200" /></svg>
          <Sep cls="ml-[6px] h-[26px]" />
          <svg width="19" height="20" viewBox="0 0 19 20" className="ml-[5px]"><path d="M1 1H9.500L13 4.500V17H1Z" fill="#fff" stroke="#8a8a8a" strokeWidth="1.200" /><circle cx="12.500" cy="13.500" r="3.200" fill="none" stroke="#2f6a9b" strokeWidth="2.400" /><path d="M12.500 8.500v10M7.500 13.500h10M9 10l7 7M16 10l-7 7" stroke="#2f6a9b" strokeWidth="1.400" /><circle cx="12.500" cy="13.500" r="2" fill="#fff" /></svg>
        </div>
        <div className="flex w-[725px] items-center whitespace-nowrap pl-[9px]">
          <span className="w-[50px] tracking-[0.2px]">IMAGE</span>
          <PageGlyph><path d="M9 8h4M9 11h4M6 15h7" stroke="#e0701c" strokeWidth="1.500" /><circle cx="6" cy="8" r="4.500" fill="#fff" stroke="#222" strokeWidth="1.700" /><path d="M4.500 10 6 5.500 7.500 10" fill="none" stroke="#e0701c" strokeWidth="1.200" /><path d="M9.500 11.500 14 17" stroke="#222" strokeWidth="2.200" /></PageGlyph>
          <span className="ml-[4px] w-[62px]">Read Page</span>
          <PageGlyph><path d="M4.500 3H10V6H4.500Z" fill="#3b78c0" /><path d="M4.500 8H13V16.500H4.500Z" fill="#5e9384" /><path d="M11 3.500h2.500V10H11Z" fill="#e0701c" /></PageGlyph>
          <span className="ml-[5px] w-[77px]">Analyze Page</span>
          <PageGlyph><path d="M4.500 3H8V7H4.500Z" fill="#f3b99a" /><path d="M9 4h4M9 6.500h4" stroke="#999" /><path d="M7 8H15L17.500 14H5Z" fill="#34719f" /><path d="M5 14.500H18V18.500H5Z" fill="#2b5f88" /></PageGlyph>
          <span className="ml-[5px]">Save Page</span>
        </div>
        <div className="flex flex-1 items-center border-l border-t-2 border-[#8a8a8a] border-t-[#4a90d0] pb-[1px] pl-[2px]">
          <Sel cls="h-[23px] w-[141px] border-[#adadad] bg-[#e1e1e1] pl-[10px]">Body text (2)</Sel>
          <svg width="19" height="18" viewBox="0 0 19 18" className="ml-[4px] shrink-0"><path d="M1 15 8 2.500 11 14M4 10H10" fill="none" stroke="#555" strokeWidth="2.200" /><path d="M18.500 1 12 9l1.500 2Q18.500 6 18.500 1ZM12 9.500Q9 11 9 16.500 13.500 15 13.500 11.500Z" fill="#2f6a9b" stroke="#2f6a9b" strokeWidth=".6" /></svg>
          <Sep cls="ml-[4px] h-[24px]" />
          <Sel cls="ml-[2px] h-[23px] w-[135px] border-[#adadad] bg-[#e1e1e1]">Sylfaen</Sel>
          <Sel cls="ml-[2px] h-[23px] w-[56px] border-[#7a7a7a] bg-white">9</Sel>
          <svg width="52" height="24" viewBox="-2 -4 52 24" className="ml-[4px] shrink-0 overflow-visible font-['Open_Sans',sans-serif] font-bold"><text x="0" y="14" fontSize="17" fill="#555">A</text><path d="M12 4 14.500 1 17 4Z" fill="#2f78b8" /><text x="27" y="14" fontSize="13" fill="#555">A</text><path d="M36.500 3H41.500L39 6Z" fill="#2f78b8" /></svg>
          <Sep cls="h-[24px] -ml-[3px]" />
          <div className="flex w-[131px] shrink-0 items-center pl-[8px] text-[18px] font-bold text-[#555]">
            <span className="w-[27px]">B</span>
            <span className="w-[24px] font-['Liberation_Serif',serif] text-[19px] italic">I</span>
            <span className="w-[25px] border-[#555] font-semibold underline underline-offset-2">U</span>
            <span className="flex w-[26px] text-[15px]">X<span className="-mt-[3px] text-[10px] text-[#2f6aa8]">2</span></span>
            <span className="flex text-[15px]">X<span className="mt-[8px] text-[10px] text-[#2f6aa8]">2</span></span>
          </div>
          <Sep cls="h-[24px]" />
          <div className="ml-[7px] flex gap-[10px]"><Align k={0} /><Align k={1} /><Align k={2} /><Align k={3} /><Align k={4} /></div>
          <svg width="9" height="8" viewBox="0 0 9 8" className="ml-auto mr-[7px]"><path d="M1 1 4 4 1 7M5 1 8 4 5 7" fill="none" stroke="#2060a8" strokeWidth="1.300" /></svg>
        </div>
      </div>

      <div className="flex h-[676px] shrink-0">
        {/* pages */}
        <div className="flex w-[150px] shrink-0 flex-col border-r border-[#8a8a8a] text-[12.500px]">
          <div className="relative ml-[13px] mt-[2px] h-[96px] w-[70px] border-[3px] border-[#4a85bb]"><Thumb /><ThumbTag /></div>
          <span className="w-[96px] pt-[5px] text-center">1</span>
          <div className="relative ml-[15px] mt-[23px] h-[92px] w-[66px] border border-[#aaa]"><Thumb pink /><ThumbTag /></div>
          <span className="w-[96px] pt-[7px] text-center">2</span>
        </div>
        <div className="flex w-[1450px] shrink-0 flex-col">
          <div className="flex h-[476px] shrink-0">
            {/* image pane */}
            <div className="flex w-[725px] flex-col">
              <div className="flex h-[453px]">
                <div className="flex w-[33px] shrink-0 flex-col items-center bg-[#dfe7f1] pr-[1px] pt-[2px]">
                  <Tile on><AreaIcon c="#5e9384"><path d="M4 5h11M4 8h11M4 11h11M4 14h11" stroke="#aaa" strokeWidth=".8" /><text x="9.500" y="15" fontSize="15" fontWeight="700" textAnchor="middle" fill="#444" className="font-['Liberation_Serif',serif]">A</text></AreaIcon></Tile>
                  <Tile><AreaIcon c="#e0701c"><Pic /></AreaIcon></Tile>
                  <div className="mt-[2px]"><Tile><AreaIcon c="#c02030"><Pic /><rect x="8.500" y="8.500" width="10" height="10" fill="#fff" stroke="#5e9384" /><text x="13.500" y="17" fontSize="9" fontWeight="700" textAnchor="middle" fill="#333">A</text></AreaIcon></Tile></div>
                  <Tile><AreaIcon c="#3b6f99"><path d="M4 4h5v5H4ZM10 4h5v5h-5ZM4 10h5v5H4ZM10 10h5v5h-5Z" fill="#8a8a8a" /></AreaIcon></Tile>
                  <Tile><AreaIcon c="#777" dash><path d="M4 4H15V15H4Z" fill="#d5d5d5" /></AreaIcon></Tile>
                  <div className="mt-[5px] h-px w-[22px] bg-[#777]" />
                  <div className="mt-[3px]"><Tile><AreaIcon c="#666"><path d="M-1-1H6V6H-1Z" fill="#dfe7f1" /><path d="M0 0 6 6M6 0 0 6" stroke="#e0701c" strokeWidth="2" transform="translate(-.5 -.5)" /></AreaIcon></Tile></div>
                  <div className="mt-[2px]"><Tile>
                    <svg width="19" height="19" viewBox="0 0 19 19"><path d="M6 5H14V13H6Z" fill="#e6e6e6" stroke="#777" strokeDasharray="2 1" /><path d="M3 7H10V15H3Z" fill="none" stroke="#999" strokeDasharray="2 1" /><path d="M3.500 10V18M1 15l2.500 3L6 15" fill="none" stroke="#2f6a9b" strokeWidth="2" /><path d="M16 9V1M13.500 4 16 1 18.500 4" fill="none" stroke="#e0701c" strokeWidth="2" /></svg>
                  </Tile></div>
                  <div className="mt-[3px] h-px w-[22px] bg-[#777]" />
                  <svg width="16" height="20" viewBox="0 0 16 20" className="mt-[5px]"><path d="M2 1V15.500L5.500 12.200 8.500 18.500 11 17.300 8.200 11.300H12.800Z" fill="#fff" stroke="#444" strokeWidth="1.100" /></svg>
                  <svg width="19" height="20" viewBox="0 0 19 20" className="mt-[4px]"><path d="M6 18.500Q5 15 1.200 11.500 1 9.500 3.500 10.500L5 12 3.200 5Q3.500 3.300 5 4.300L7 9 6.800 2.500Q7.700 1 8.700 2.300L9.500 8.500 11 2Q12.300 1.200 12.700 2.700L12.300 9 15 4.500Q16.500 4.300 16.300 6L14.500 13Q14 16 13 18.500Z" fill="#fff" stroke="#555" /></svg>
                </div>
                <div className="w-[675px] shrink-0 bg-[#8b8b8b] pl-[2px] pt-[2px]">
                  <div className="relative flex h-[445px] w-[344px] bg-white pl-[22px] pt-[9px]">
                    <ScanTable />
                    <div className="mt-[14px] flex h-[236px] w-[20px] justify-between border border-[#0a860a] bg-[#d5ecd5] py-[2px] font-['Liberation_Serif',serif] text-[6.500px] leading-[6px] tracking-normal text-[#446] [writing-mode:vertical-rl]">
                      <span className="whitespace-nowrap">Học kỳ: II<br />Lớp: K8CNTT01<br />Khóa: 8</span>
                      <span className="whitespace-nowrap">Năm học: 2015-2016<br />Tổng số TC: 62</span>
                    </div>
                    <div className="absolute left-[1px] top-[279px] h-[43px] w-[342px] border border-black">
                      <svg width="20" height="20" viewBox="0 0 20 20" className="-ml-px"><path d="M11 11 18.500 18.500" stroke="#333" strokeWidth="4" /><path d="M11.500 11.500 17.500 17.500" stroke="#ddd" strokeWidth="1.800" /><circle cx="7.500" cy="7" r="6.200" fill="#fff" stroke="#222" strokeWidth="1.300" /></svg>
                    </div>
                  </div>
                </div>
                <div className="flex w-[17px] items-end justify-center bg-[#f0f0f0] pb-[3px]"><Chev d="d" c="#555" /></div>
              </div>
              <div className="flex h-[23px] items-center bg-[#f0f0f0]">
                <div className="flex h-[23px] w-[33px] items-center justify-center bg-[#dfe7f1]"><DoubleUp /></div>
                <ZoomBar active />
                <div className="mr-[20px]"><Chev d="r" /></div>
              </div>
            </div>
            {/* text pane */}
            <div className="flex w-[725px] flex-col border-l border-[#8a8a8a]">
              <div className="flex h-[453px]">
                <div className="flex w-[33px] shrink-0 flex-col items-center bg-[#dfe7f1] pr-[2px] pt-[2px]">
                  <Tile on><svg width="22" height="20" viewBox="0 0 22 20"><path d="M0 1H22V12H0Z" fill="#34719f" /><path d="M12 4H22V1H12Z" fill="#dfeef5" /><path d="M0 9 8 6 15 7 22 2V9Z" fill="#5e9384" /><path d="M2 14H20V19H2Z" fill="#fff" stroke="#777" /></svg></Tile>
                  <Tile on><svg width="22" height="20" viewBox="0 0 22 20"><path d="M3 3H19V17H3Z" fill="#fff" stroke="#888" /><path d="M0 2H22M0 18H22" stroke="#e0701c" strokeWidth="2.500" /><path d="M5 6H17M5 9H17M5 12H17" stroke="#bbb" /></svg></Tile>
                  <div className="mt-[3px]"><Tile><svg width="22" height="20" viewBox="0 0 22 20"><path d="M0 2H21V19H0Z" fill="#aaa" /><path d="M0 0H17" stroke="#888" /><path d="M18 7V13H12M15 10 12 13 15 16" fill="none" stroke="#fff" strokeWidth="1.600" /></svg></Tile></div>
                  <div className="mt-[1px] h-px w-[26px] bg-[#777]" />
                  <div className="mt-[4px]"><Tile on><svg width="22" height="20" viewBox="0 0 22 20"><path d="M0 0H21V14H0Z" fill="#3c78b8" /><text x="12" y="11" fontSize="14" fontWeight="700" textAnchor="middle" fill="#fff">æ</text><Wave x={2} y={18} n={6} /></svg></Tile></div>
                  <div className="mt-[2px]"><Tile><svg width="22" height="20" viewBox="0 0 22 20"><path d="M11 5 13 1H20V14" fill="none" stroke="#e0701c" strokeWidth="2" /><circle cx="12" cy="8" r="4.500" fill="none" stroke="#555" strokeWidth="2" /><path d="M15 11 20 16" stroke="#444" strokeWidth="2.500" /><Wave x={3} y={18} n={5} /></svg></Tile></div>
                  <div className="mt-[1px]"><Tile><svg width="22" height="20" viewBox="0 0 22 20"><path d="M8 1Q15 1 15 6M12 4 15 7 18 4" fill="none" stroke="#e0701c" strokeWidth="2" /><circle cx="14" cy="11" r="4.500" fill="none" stroke="#555" strokeWidth="2.200" /><Wave x={5} y={18.500} n={5} /></svg></Tile></div>
                  <div className="mt-[1px]"><Tile><svg width="22" height="20" viewBox="0 0 22 20"><path d="M0 1H22V9H0Z" fill="#34719f" /><path d="M0 13H12M0 16H12" stroke="#777" /><path d="M11 14 15 18 22 10" fill="none" stroke="#5e9384" strokeWidth="2.500" /></svg></Tile></div>
                  <div className="mt-[1px] h-px w-[26px] bg-[#777]" />
                  <svg width="22" height="18" viewBox="0 0 22 18" className="mt-[8px]"><path d="M4 1H21M14 1V17M18 1V17" stroke="#3c78b8" strokeWidth="2" /><path d="M13 1H8a4 4 0 0 0 0 8h5Z" fill="#3c78b8" /></svg>
                </div>
                <div className="w-[674px] shrink-0 overflow-hidden bg-white pl-[17px]">
                  <TextTable />
                  <div className="flex font-['Liberation_Serif',serif] text-[6px] leading-[6.500px] text-[#665]">
                    <span className="w-[187px]">Hoc ky: II<br />Lop: K8CNTT01<br /><span className="bg-[#7ff5f7]">Khoa</span>: 8</span>
                    <span>Nam hoc: 2015-2016<br />Tong so TC: 62</span>
                  </div>
                </div>
                <div className="flex flex-1 flex-col items-center justify-between bg-[#f0f0f0] py-[3px]"><Chev d="u" c="#c0c0c0" /><Chev d="d" c="#c0c0c0" /></div>
              </div>
              <div className="flex h-[23px] items-center bg-[#f0f0f0]">
                <div className="flex h-[23px] w-[33px] items-center justify-center bg-[#dfe7f1]"><DoubleUp /></div>
                <ZoomBar light />
                <div className="mr-[20px]"><Chev d="r" /></div>
              </div>
            </div>
          </div>
          {/* zoom pane */}
          <div className="h-px shrink-0 bg-[#8a8a8a]" />
          <div className="flex h-[176px] shrink-0">
            <div className="w-[3px] shrink-0 bg-[#8b8b8b]" />
            <ZoomStrip />
            <div className="w-[11px] shrink-0 bg-[#8b8b8b]" />
            <div className="flex flex-1 flex-col items-center bg-[#f0f0f0] py-[4px]"><Chev d="u" c="#555" /><div className="mt-[90px] h-[17px] w-[15px] bg-[#cdcdcd]" /><div className="mt-auto"><Chev d="d" c="#555" /></div></div>
          </div>
          <div className="flex h-[23px] shrink-0 items-center bg-[#f0f0f0] pl-[4px]">
            <svg width="16" height="16" viewBox="0 0 16 16"><path d="M.7.7H15.300V15.300H.7Z" fill="#fff" stroke="#777" /><path d="M2.500 2.500H9V9H2.500Z" fill="#555" /><path d="M10 5.500H13.500V13.500H6V10.500" fill="none" stroke="#666" strokeWidth="1.300" strokeDasharray="3 1" /></svg>
            <Sep cls="ml-[5px] h-[19px] bg-[#777]" />
            <div className="ml-[8px]"><Minus /></div>
            <Sel cls="ml-[6px] h-[23px] w-[60px] border-[#707070] bg-white">174%</Sel>
            <div className="ml-[7px]"><Plus /></div>
            <div className="ml-[8px]"><Chev d="l" /></div>
            <div className="ml-auto mr-[20px]"><Chev d="r" /></div>
          </div>
        </div>
      </div>

      {/* status bar */}
      <div className="flex h-[25px] shrink-0 items-center bg-[#3f3f3f] text-[#f0f0f0]">
        <div className="flex h-full w-[132px] items-center bg-[#1e1e1e] text-[#a9cdee]"><span className="ml-[16px] w-[67px] tracking-[0.05px]">PAGES</span><span>ZOOM</span></div>
        <span className="ml-[16px] w-[129px]">ALERTS</span>
        <svg width="10" height="12" viewBox="0 0 10 12"><path d="M10 0V12L0 6Z" fill="#9a9a9a" /></svg>
        <span className="ml-[24px] w-[88px] whitespace-nowrap">PAGE 1 OF 2</span>
        <svg width="10" height="12" viewBox="0 0 10 12"><path d="M0 0V12L10 6Z" fill="#fff" /></svg>
      </div>

      {/* taskbar */}
      <div className="relative flex h-[40px] shrink-0 items-center bg-gradient-to-r from-[#0b2028] via-[#071620] to-[#020a14] text-white">
        <div className="flex w-[48px] shrink-0 justify-center"><FaWindows size={17} /></div>
        <div className="flex h-[40px] w-[344px] shrink-0 items-center bg-[#333] pl-[9px] text-[15px] text-[#a2a2a2]">
          <i className="h-[21px] w-[21px] rounded-full border-[3px] border-white" />
          <span className="ml-[10px] tracking-[-0.2px]">Type here to search</span>
          <svg width="12" height="18" viewBox="0 0 12 18" className="ml-auto mr-[15px]"><rect x="3" y=".5" width="6" height="11" fill="none" stroke="#aaa" /><path d="M3 6H9V11.500H3Z" fill="#aaa" /><path d="M.8 8V13.500H11.200V8M6 14V17M3 17.400H9" fill="none" stroke="#aaa" strokeWidth="1.100" /></svg>
        </div>
        <svg width="20" height="16" viewBox="0 0 20 16" className="ml-[14px] shrink-0"><path d="M4.500 1H15.500V15H4.500ZM3 3H1V13H3M17 3H19V13H17" fill="none" stroke="#fff" strokeWidth="1.100" /></svg>
        <div className="ml-[30px] text-[#1381dd]"><FaEdgeLegacy size={22} /></div>
        <svg width="22" height="19" viewBox="0 0 22 19" className="ml-[27px] shrink-0"><path d="M0 1H8L10 3H21V18H0Z" fill="#f5cf6c" /><path d="M1 5H21V18H1Z" fill="#fde08e" /><path d="M4 11H17V18H14V14.500H7V18H4Z" fill="#38a9dc" /></svg>
        <svg width="22" height="23" viewBox="0 0 22 23" className="ml-[27px] shrink-0"><path d="M0 6H22L20 22H2Z" fill="#fff" /><path d="M6 6Q6 1 11 1 16 1 16 6" fill="none" stroke="#fff" strokeWidth="1.500" /><path d="M5.500 9.500 10 9V13.500H5.500ZM11 8.800 16.500 8.200V13.500H11ZM5.500 14.500H10V19L5.500 18.500ZM11 14.500H16.500V19.800L11 19.200Z" fill="#0b1c26" /></svg>
        <div className="ml-[18px] flex h-[40px] w-[153px] shrink-0 items-center border-b-2 border-[#76b9ed] pl-[6px]">
          <svg width="22" height="22" viewBox="0 0 22 22"><path d="M7 1 22 3 16 22 0 17Z" fill="#8fc3cf" /><path d="M7 1 15 2 9 20 0 17Z" fill="#c8e6ea" /><path d="M16 22 22 3 21 15Z" fill="#5c8e9c" /></svg>
          <span className="ml-[6px] whitespace-nowrap tracking-[-0.05px]">Untitled - Notepad</span>
        </div>
        <div className="ml-[8px] flex h-[40px] w-[153px] shrink-0 items-center border-b-2 border-[#76b9ed] pl-[7px]">
          <svg width="22" height="22" viewBox="0 0 22 22"><circle cx="11" cy="11" r="11" fill="#fbc116" /><path d="M1.500 5.500A11 11 0 0 1 20.500 5.500H11Q6 6 6 11Z" fill="#e33b2e" /><path d="M1.500 5.500 6.300 13.800Q8.500 17 12 16.400L9.500 21.900A11 11 0 0 1 1.500 5.500Z" fill="#2ba24c" /><circle cx="11" cy="11" r="5.200" fill="#fff" /><circle cx="11" cy="11" r="4.200" fill="#4285f4" /></svg>
          <span className="ml-[6px] whitespace-nowrap">(51) Loa Phường tậ...</span>
        </div>
        <div className="ml-[4px] flex h-[40px] w-[160px] shrink-0 items-center border-b-2 border-[#76b9ed] bg-[#34444f] pl-[10px]">
          <Abbyy s={23} /><span className="ml-[5px] whitespace-nowrap tracking-[-0.08px]">Untitled document ...</span>
        </div>
        <svg width="60" height="40" viewBox="0 0 60 40" className="ml-[85px]"><path d="M4-2Q25 14 50 42" fill="none" stroke="#262a2c" strokeWidth="7" /></svg>
        <div className="ml-auto mr-[23px] flex items-center">
          <svg width="13" height="8" viewBox="0 0 13 8"><path d="M1 7 6.500 1.500 12 7" fill="none" stroke="#fff" strokeWidth="1.300" /></svg>
          <svg width="17" height="14" viewBox="0 0 17 14" className="ml-[9px]"><path d="M5 5H15V12H4V9" fill="none" stroke="#fff" strokeWidth="1.300" /><path d="M7 6.500H14V10.500H7ZM16 7v3M1 3.500H6V7H4V9H3V7H1ZM2 1V3M5 1V3" fill="#fff" stroke="#fff" strokeWidth=".9" /></svg>
          <svg width="17" height="15" viewBox="0 0 17 15" className="ml-[7px]"><path d="M4 2H16V10H4M10 10V13.500M6.500 13.500H13.500M.7.7H4V4.500H.7ZM2.300 4.500V14" fill="none" stroke="#fff" strokeWidth="1.100" /></svg>
          <svg width="17" height="14" viewBox="0 0 17 14" className="ml-[6px]"><path d="M.7 4.500H3L6.500 1V13L3 9.500H.7Z" fill="none" stroke="#fff" strokeWidth="1.100" /><path d="M9 4.500Q10.500 7 9 9.500M11.500 3Q13.500 7 11.500 11M14 1.500Q16.800 7 14 12.500" fill="none" stroke="#fff" strokeWidth="1" /></svg>
          <div className="ml-[9px] flex w-[54px] flex-col items-center gap-[6px] whitespace-nowrap text-[11.500px]"><span>10:46 PM</span><span>9/9/2017</span></div>
          <div className="relative ml-[18px]">
            <svg width="17" height="18" viewBox="0 0 17 18"><path d="M0 1H16V13H12V17L8 13H0Z" fill="#fff" /><path d="M3 4.500H13M3 7H13M3 9.500H13" stroke="#111" strokeWidth="1.100" /></svg>
            <span className="absolute left-[4px] top-[7px] flex h-[20px] w-[21px] items-center justify-center rounded-full border border-[#999] bg-[#2c2c2c] text-[12px] font-semibold">22</span>
          </div>
        </div>
        <div className="absolute right-[4px] top-0 h-[40px] w-px bg-[#4a5560]" />
      </div>

      {/* save menu */}
      <div className="absolute left-[594px] top-[125px] flex h-[299px] w-[294px] flex-col whitespace-nowrap border border-[#b5b5b5] border-t-[#8a8a8a] bg-[#f2f2f2] pb-[2px] pt-[3px] shadow-[4px_4px_3px_rgba(0,0,0,0.5)]">
        <MenuItem>Save as Microsoft Word Document...</MenuItem>
        <MenuItem>Save as Microsoft Excel Workbook...</MenuItem>
        <MenuItem>Save as PDF Document...</MenuItem>
        <MenuItem>Save as PDF/A Document...</MenuItem>
        <MenuItem>Save as Electronic Publication (EPUB)...</MenuItem>
        <MenuSep />
        <MenuItem bold dot>Save as DOC...</MenuItem>
        <MenuItem>Save in Other Formats...</MenuItem>
        <MenuSep />
        <MenuItem>Send to Microsoft Word</MenuItem>
        <MenuItem on>Send to Microsoft Excel</MenuItem>
        <MenuSep />
        <MenuItem>Send to Other Applications...</MenuItem>
        <MenuSep />
        <MenuItem>E-mail Document...</MenuItem>
        <MenuItem>Send to Kindle...</MenuItem>
      </div>

      {/* watermark */}
      <div className="absolute left-[674px] top-[427px] w-[250px] -rotate-[32deg] whitespace-nowrap text-center text-[45px] font-medium tracking-[-0.6px] text-[#ff8080]/50">freetuts.net</div>
    </div>
  );
}
